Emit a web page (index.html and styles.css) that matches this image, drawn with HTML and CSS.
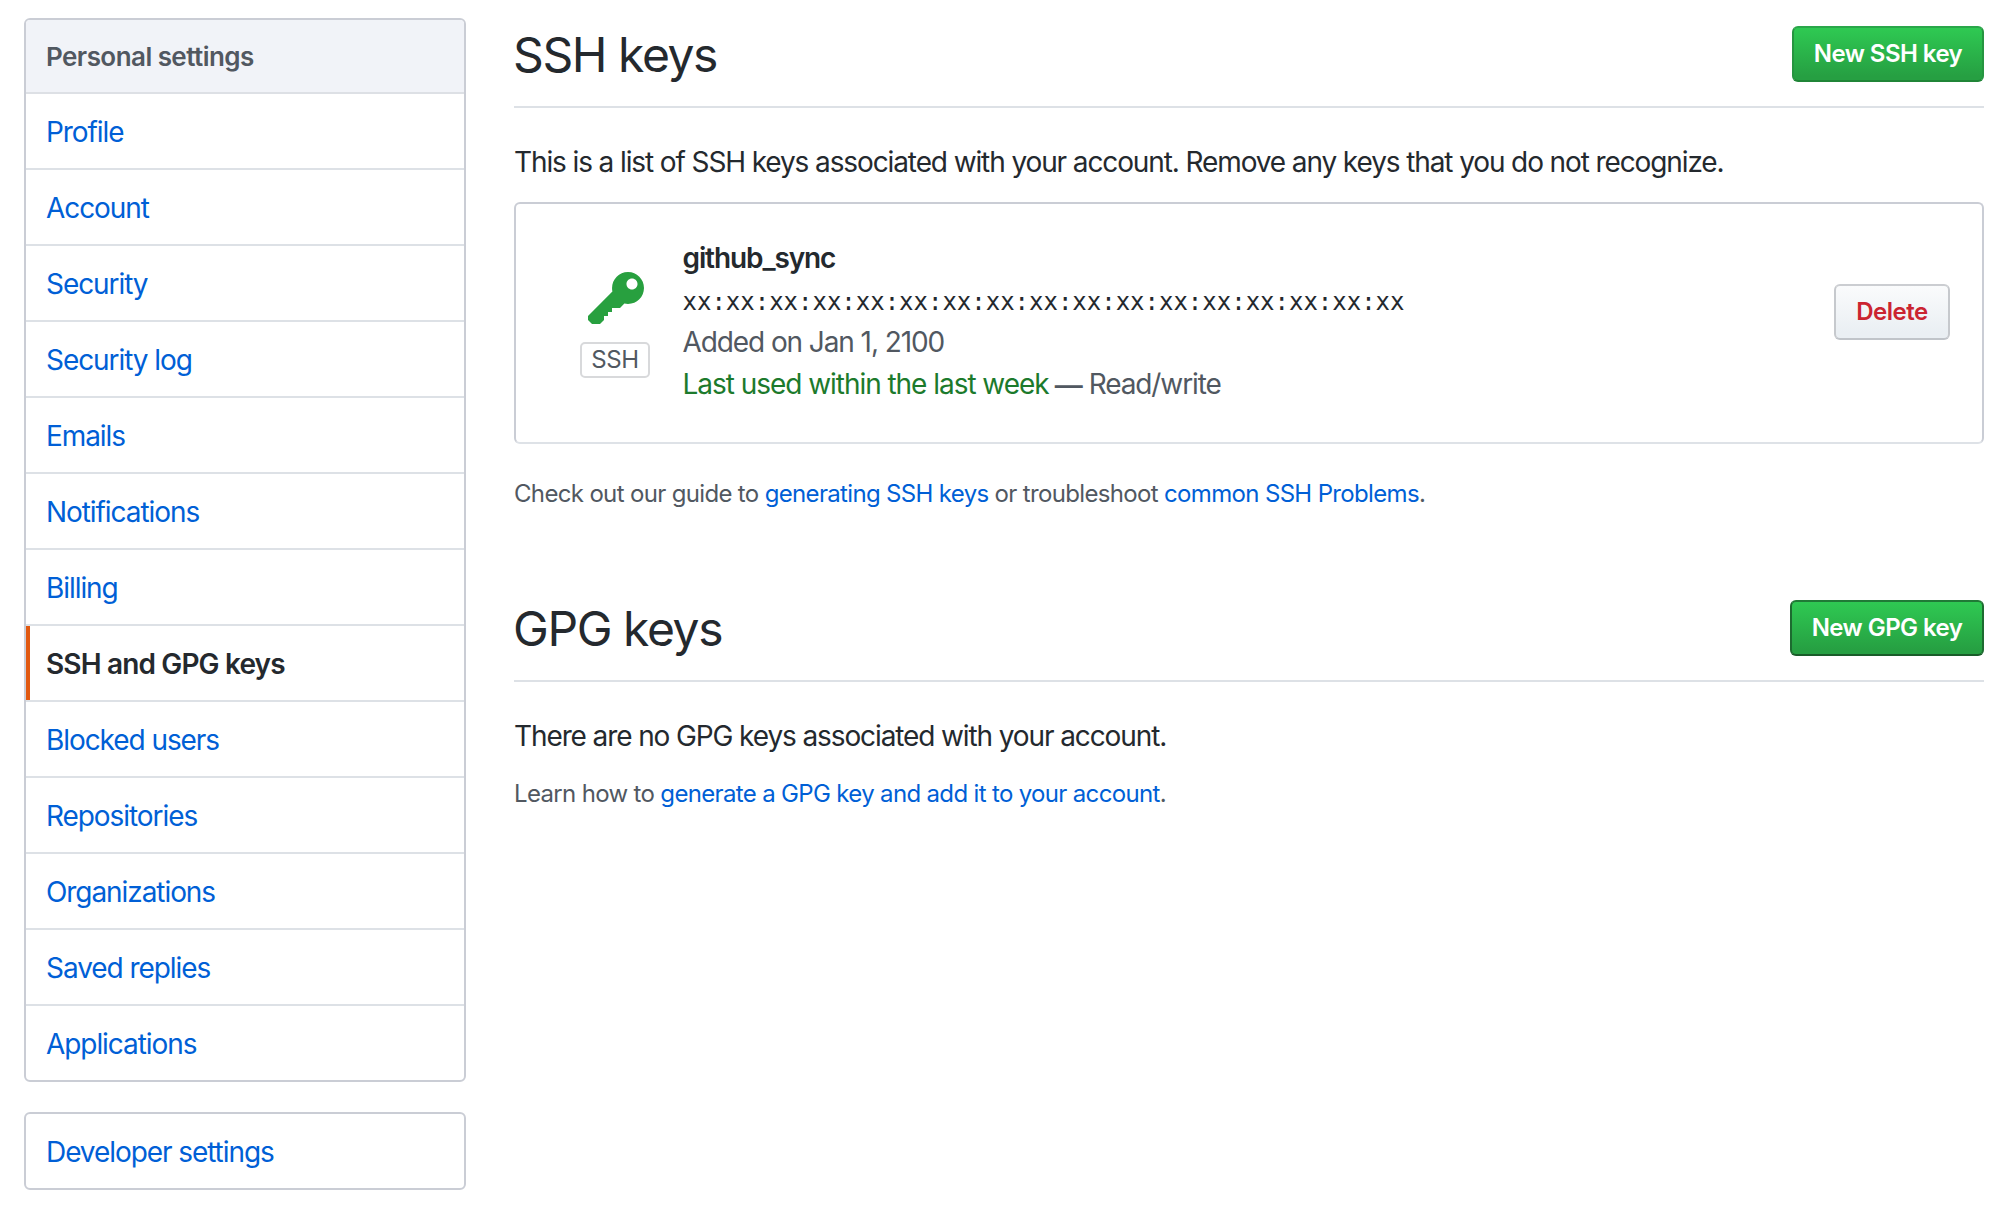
FILE: index.html
```html
<!DOCTYPE html>
<html lang="en">
<head>
<meta charset="utf-8">
<title>SSH and GPG keys</title>
<link rel="stylesheet" href="styles.css">
</head>
<body>
<div class="page">
  <aside class="sidebar">
    <nav class="menu">
      <h3 class="menu-heading">Personal settings</h3>
      <a class="menu-item" href="#">Profile</a>
      <a class="menu-item" href="#">Account</a>
      <a class="menu-item" href="#">Security</a>
      <a class="menu-item" href="#">Security log</a>
      <a class="menu-item" href="#">Emails</a>
      <a class="menu-item" href="#">Notifications</a>
      <a class="menu-item" href="#">Billing</a>
      <a class="menu-item selected" href="#">SSH and GPG keys</a>
      <a class="menu-item" href="#">Blocked users</a>
      <a class="menu-item" href="#">Repositories</a>
      <a class="menu-item" href="#">Organizations</a>
      <a class="menu-item" href="#">Saved replies</a>
      <a class="menu-item" href="#">Applications</a>
    </nav>
    <nav class="menu">
      <a class="menu-item" href="#">Developer settings</a>
    </nav>
  </aside>
  <main class="content">
    <section class="section">
      <header class="subhead">
        <h2 class="subhead-heading">SSH keys</h2>
        <a class="btn btn-primary btn-ssh" href="#">New SSH key</a>
      </header>
      <p class="lead">This is a list of SSH keys associated with your account. Remove any keys that you do not recognize.</p>
      <div class="key-card">
        <div class="key-type">
          <svg class="key-icon" viewBox="0 0 14 16" width="56" height="64" aria-hidden="true"><path fill-rule="evenodd" d="M12.83 2.17C12.08 1.42 11.14 1.03 10 1c-1.13.03-2.08.42-2.83 1.17S6.04 3.86 6.01 5c0 .3.03.59.09.89L0 12v1l1 1h2l1-1v-1h1v-1h1v-1h2l1.09-1.11c.3.08.59.11.91.11 1.14-.03 2.08-.42 2.83-1.17S13.97 6.14 14 5c-.03-1.14-.42-2.08-1.17-2.83zM11 5.38c-.77 0-1.38-.61-1.38-1.38 0-.77.61-1.38 1.38-1.38.77 0 1.38.61 1.38 1.38 0 .77-.61 1.38-1.38 1.38z"/></svg>
          <span class="badge">SSH</span>
        </div>
        <div class="key-info">
          <strong class="key-title">github_sync</strong>
          <code class="fingerprint">xx:xx:xx:xx:xx:xx:xx:xx:xx:xx:xx:xx:xx:xx:xx:xx:xx</code>
          <span class="key-meta">Added on Jan 1, 2100</span>
          <span class="key-meta"><span class="recent">Last used within the last week</span><span class="dash">—</span>Read/write</span>
        </div>
        <button class="btn btn-danger" type="button">Delete</button>
      </div>
      <p class="note">Check out our guide to <a href="#">generating SSH keys</a> or troubleshoot <a href="#">common SSH Problems</a>.</p>
    </section>
    <section class="section">
      <header class="subhead">
        <h2 class="subhead-heading">GPG keys</h2>
        <a class="btn btn-primary btn-gpg" href="#">New GPG key</a>
      </header>
      <p class="lead">There are no GPG keys associated with your account.</p>
      <p class="note note-gpg">Learn how to <a href="#">generate a GPG key and add it to your account</a>.</p>
    </section>
  </main>
</div>
</body>
</html>
```
FILE: styles.css
```css
* { box-sizing: border-box; }

body {
  margin: 0;
  background: #fff;
  color: #24292e;
  font-family: Inter, "Liberation Sans", sans-serif;
  font-size: 28px;
  line-height: 42px;
  letter-spacing: -1.11px;
}

a { color: #005fd6; text-decoration: none; }
h2, h3, p { margin: 0; }

.page {
  display: flex;
  gap: 48px;
  padding: 18px 24px 0;
}

/* Sidebar */
.sidebar {
  flex: 0 0 442px;
  display: flex;
  flex-direction: column;
  gap: 30px;
}

.menu {
  border: 2px solid #cacdd5;
  border-radius: 6px;
  overflow: hidden;
}

.menu-heading {
  height: 74px;
  padding: 17px 20px 0;
  border-bottom: 2px solid #dde0e5;
  background: #f1f3f8;
  color: #515861;
  font-size: 26px;
  font-weight: 600;
  line-height: 39px;
  letter-spacing: -0.55px;
}

.menu-item {
  display: block;
  height: 76px;
  padding: 17px 20px 15px;
  border-bottom: 2px solid #dde1e6;
  letter-spacing: -1.07px;
}

.menu-item:last-child { height: 74px; border-bottom: 0; }

.menu-item.selected {
  height: 74px;
  margin-bottom: 2px;
  padding-left: 16px;
  border-bottom: 0;
  border-left: 4px solid #e1580f;
  box-shadow: 0 2px #dde1e6;
  color: #24292e;
  font-weight: 600;
  letter-spacing: -0.85px;
}

/* Content */
.content { flex: 1; min-width: 0; }
.section + .section { margin-top: 80px; }

.subhead {
  display: flex;
  align-items: flex-start;
  justify-content: space-between;
  height: 90px;
  border-bottom: 2px solid #dde1e6;
}

.subhead-heading {
  margin-left: -1px;
  padding-top: 1px;
  font-size: 48px;
  font-weight: 400;
  line-height: 72px;
  letter-spacing: -1.42px;
}

.lead { margin-top: 33px; }

.btn {
  display: block;
  height: 56px;
  padding: 6px 0 0;
  border: 2px solid;
  border-radius: 6px;
  font: 600 24px/40px Inter, "Liberation Sans", sans-serif;
  letter-spacing: -0.55px;
  text-align: center;
}

.btn-primary {
  margin-top: 8px;
  color: #fff;
  background: linear-gradient(-180deg, #2fcb53, #269f42 90%) -2px -2px / calc(100% + 4px) calc(100% + 4px);
}

.btn-ssh { width: 192px; border-color: #2aa74a #269540 #208537; }
.btn-gpg { width: 194px; border-color: #207a36 #1d6b30 #195c29; }

/* Key card */
.key-card {
  display: flex;
  align-items: flex-start;
  height: 242px;
  margin-top: 19px;
  padding: 33px 32px 0 64px;
  border: 2px solid #cacdd5;
  border-bottom-color: #dee2e7;
  border-radius: 6px;
}

.key-type {
  flex: 0 0 70px;
  display: flex;
  flex-direction: column;
  align-items: center;
  padding-top: 31px;
}

.key-icon { margin-left: 2px; fill: #28a03f; }

.badge {
  width: 70px;
  height: 36px;
  margin-top: 10px;
  border: 2px solid #d8d9db;
  border-radius: 5px;
  color: #515861;
  font-size: 24px;
  line-height: 31px;
  letter-spacing: -0.4px;
  text-align: center;
}

.key-info {
  flex: 1;
  display: flex;
  flex-direction: column;
  padding-left: 32.5px;
}

.key-title { font-weight: 600; }

.fingerprint {
  height: 42px;
  padding-top: 2px;
  font: 24px/42px "DejaVu Sans Mono", monospace;
  letter-spacing: -0.01px;
}

.key-meta { color: #515861; letter-spacing: -1.09px; }
.recent { color: #1c7a2c; letter-spacing: -1.04px; }

.dash {
  margin: 0 6px;
  font-family: "Liberation Sans", sans-serif;
  font-weight: 700;
  letter-spacing: 0;
}

.btn-danger {
  width: 116px;
  margin-top: 47px;
  padding: 0;
  color: #cb2431;
  border-color: #cbcdd1 #c6c9cd #c0c4c9;
  background: linear-gradient(-180deg, #fafbfc, #eaeff3 90%);
  letter-spacing: -0.45px;
}

/* Notes */
.note {
  margin-top: 32px;
  color: #515861;
  font-size: 24px;
  line-height: 36px;
  letter-spacing: -0.66px;
}

.note-gpg { margin-top: 19px; }
```
